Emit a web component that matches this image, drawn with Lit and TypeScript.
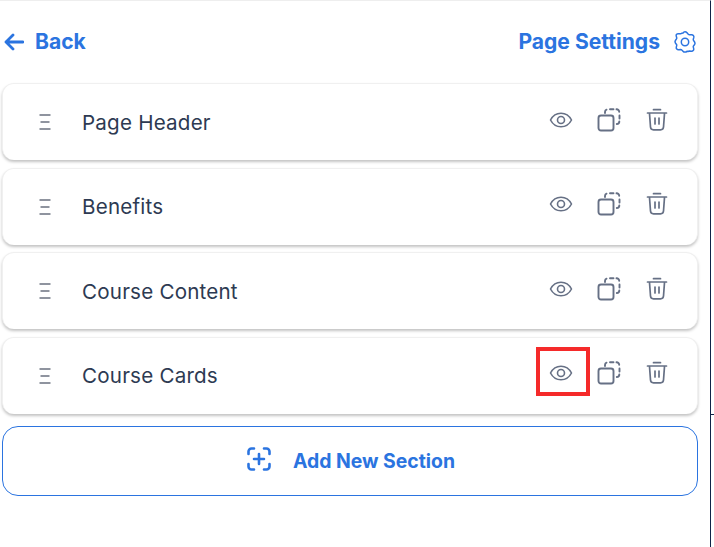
import { LitElement, html, css, svg } from "lit";
import { customElement } from "lit/decorators.js";

const grip = html`<svg class="grip" width="12" height="16" viewBox="0 0 12 16" fill="none" stroke="#6b7280" stroke-width="1.3"><path d="M0.5 1h11M1.5 8h9M0.5 15h11"/></svg>`;
const eye = html`<svg width="24" height="24" viewBox="0 0 24 24" fill="none" stroke="#667085" stroke-width="1.6" stroke-linecap="round" stroke-linejoin="round"><path d="M1.5 12C3.8 7.6 7.6 5.2 12 5.2s8.200 2.400 10.500 6.800C20.200 16.400 16.400 18.800 12 18.800S3.800 16.400 1.500 12Z"/><circle cx="12" cy="12" r="3.500"/></svg>`;
const copy = html`<svg width="24" height="24" viewBox="0 0 24 24" fill="none" stroke="#667085" stroke-width="1.9" stroke-linecap="round" stroke-linejoin="round"><rect x="1.500" y="7.500" width="15" height="15" rx="2.500"/><path d="M8 5V4a2.500 2.500 0 0 1 1.500-2.300M13 1.300h3.500M19.500 1.300a2.500 2.500 0 0 1 2.700 2.500M22.500 7.500v3M22.300 13.500a2.500 2.500 0 0 1-2.500 2.500"/></svg>`;
const trash = html`<svg width="24" height="24" viewBox="0 0 24 24" fill="none" stroke="#667085" stroke-width="1.7" stroke-linecap="round" stroke-linejoin="round"><path d="M2.500 5h19M8.500 1.700h7M4.500 5.500 5.500 19a3 3 0 0 0 3 2.800h7a3 3 0 0 0 3-2.800l1-13.500M10 10v6M14 10v6"/></svg>`;

const gear = svg`<path d="M12 1.800c.8 0 1.500.4 2 1l1.300 1.500c.3.300.7.500 1.200.5l2-.1c1.500-.1 2.700 1.100 2.300 2.700l-.5 1.800c-.1.400 0 .9.200 1.200l1.100 1.600c.5.800.5 1.800 0 2.600l-1.100 1.300c-.2.300-.3.800-.2 1.200l.4 1.500c.4 1.500-.9 2.800-2.400 2.600l-1.900-.2c-.5 0-.9.100-1.200.5L14 21.200c-1 1.200-3 1.200-4 0l-1.200-1.200c-.3-.4-.7-.5-1.200-.5l-1.900.2c-1.500.2-2.800-1.100-2.400-2.600l.4-1.500c.1-.4 0-.9-.2-1.200l-1.100-1.300c-.5-.8-.5-1.800 0-2.600l1.100-1.600c.2-.3.3-.8.2-1.200l-.5-1.800C2.800 4.700 4 3.500 5.500 3.700l2 .1c.5 0 .9-.2 1.200-.5L10 3c.5-.8 1.200-1.200 2-1.200Z"/><circle cx="12" cy="12" r="3.700"/>`;

const sections = ["Page Header", "Benefits", "Course Content", "Course Cards"];

@customElement("app-root")
export class AppRoot extends LitElement {
  static styles = css`
    :host {
      display: block;
      position: relative;
      width: 714px;
      height: 547px;
      overflow: hidden;
      background: #fff;
      font-family: Inter, "Liberation Sans", sans-serif;
    }
    .page {
      box-sizing: border-box;
      width: 711px;
      height: 547px;
      border-top: 1px solid #eeeeee;
      border-right: 1px solid #0f2347;
      padding: 0 12px 0 2px;
    }
    .top {
      height: 82px;
      display: flex;
      align-items: center;
      justify-content: space-between;
      color: #2b74e0;
      font-weight: 700;
      font-size: 21.100px;
      padding: 0 1px 1px 2px;
      box-sizing: border-box;
    }
    .group {
      display: flex;
      align-items: center;
    }
    .back { gap: 11px; }
    .settings { gap: 13px; }
    .list {
      display: flex;
      flex-direction: column;
      gap: 7.500px;
    }
    .card {
      box-sizing: border-box;
      height: 77px;
      border-radius: 12px;
      background: #fff;
      border: 1px solid #f0f0f0;
      border-bottom: none;
      box-shadow: 0 2px 3px rgba(0, 0, 0, 0.24);
      display: flex;
      align-items: center;
      padding: 0 28px 0 36px;
    }
    .grip { flex: none; }
    .name {
      margin-left: 31px;
      flex: 1;
      font-size: 20.600px;
      font-weight: 400;
      color: #2d3a52;
      letter-spacing: 0.2px;
    }
    .actions {
      display: flex;
      gap: 24px;
      align-items: center;
      margin-top: -5px;
    }
    .add {
      box-sizing: border-box;
      margin-top: 12.500px;
      height: 70px;
      border: 1px solid #2b74e0;
      border-radius: 16px;
      display: flex;
      align-items: center;
      justify-content: center;
      gap: 22px;
      padding-left: 2px;
      color: #2b74e0;
      font-size: 19.400px;
      font-weight: 700;
    }
    .add svg { margin-top: -4px; }
    .marker {
      position: absolute;
      left: 536px;
      top: 347px;
      width: 54px;
      height: 49px;
      box-sizing: border-box;
      border: 4px solid #f52a2a;
    }
    .tick {
      position: absolute;
      left: 710px;
      top: 414px;
      width: 4px;
      height: 1px;
      background: #0f2347;
    }
  `;

  render() {
    return html`
      <div class="page">
        <div class="top">
          <div class="group back">
            <svg width="20" height="20" viewBox="0 0 20 20" fill="none" stroke="#2b74e0" stroke-width="2.800" stroke-linecap="round" stroke-linejoin="round"><path d="M19 10H2M9 3 2 10l7 7"/></svg>
            <span>Back</span>
          </div>
          <div class="group settings">
            <span>Page Settings</span>
            <svg width="24" height="24" viewBox="0 0 24 24" fill="none" stroke="#2b74e0" stroke-width="1.500" stroke-linejoin="round">${gear}</svg>
          </div>
        </div>
        <div class="list">
          ${sections.map(
            (s) => html`
              <div class="card">
                ${grip}
                <span class="name">${s}</span>
                <div class="actions">${eye}${copy}${trash}</div>
              </div>
            `
          )}
        </div>
        <div class="add">
          <svg width="24" height="24" viewBox="0 0 24 24" fill="none" stroke="#2b74e0" stroke-width="2.600" stroke-linecap="round" stroke-linejoin="round"><path d="M1.500 7V4.500a3 3 0 0 1 3-3H7M17 1.500h2.500a3 3 0 0 1 3 3V7M22.500 17v2.500a3 3 0 0 1-3 3H17M7 22.500H4.500a3 3 0 0 1-3-3V17M12 7v10M7 12h10"/></svg>
          <span>Add New Section</span>
        </div>
      </div>
      <div class="marker"></div>
      <div class="tick"></div>
    `;
  }
}
